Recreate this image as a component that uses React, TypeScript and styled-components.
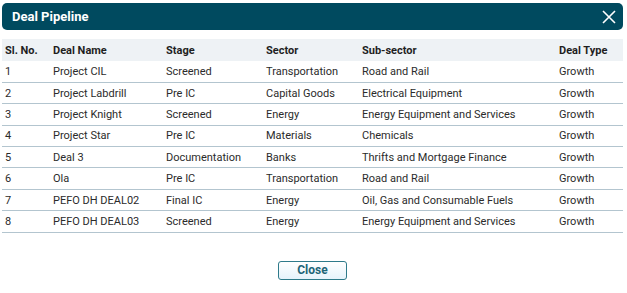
import React from "react";
import styled, { createGlobalStyle } from "styled-components";

const GlobalStyle = createGlobalStyle`
  body {
    margin: 0;
    background: #ffffff;
    font-family: Roboto, "Liberation Sans", sans-serif;
  }
`;

const Dialog = styled.div`
  width: 627px;
  height: 293px;
  box-sizing: border-box;
  padding: 3px 4px 0 2px;
  display: flex;
  flex-direction: column;
`;

const TitleBar = styled.div`
  height: 27px;
  background: #004a5f;
  border-radius: 5px;
  display: flex;
  align-items: center;
  justify-content: space-between;
  padding: 0 6px 0 10px;
`;

const Title = styled.h1`
  margin: 0;
  color: #ffffff;
  font-size: 13px;
  font-weight: 700;
`;

const CloseIcon = styled.button`
  border: none;
  background: none;
  padding: 0;
  width: 16px;
  height: 16px;
  display: flex;
  cursor: pointer;
`;

const Table = styled.table`
  margin-top: 9px;
  width: 100%;
  border-collapse: collapse;
  font-size: 11px;
  table-layout: fixed;
`;

const HeadRow = styled.tr`
  background: #eef2f5;
  height: 22px;
`;

const Th = styled.th<{ $w?: number }>`
  box-sizing: border-box;
  text-align: left;
  font-weight: 700;
  color: #1f1f1f;
  padding: 0 3px;
  white-space: nowrap;
  width: ${({ $w }) => ($w ? `${$w}px` : "auto")};
`;

const Row = styled.tr`
  height: 21.4px;
  border-bottom: 1px solid #b3c5cf;
`;

const Td = styled.td`
  color: #2b2b2b;
  padding: 0 3px;
  white-space: nowrap;
`;

const Footer = styled.div`
  display: flex;
  justify-content: center;
  padding-top: 28px;
`;

const Button = styled.button`
  width: 69px;
  height: 19px;
  border: 1px solid #2e7a8a;
  border-radius: 3px;
  background: linear-gradient(#ffffff, #e6f3fb);
  color: #1d6578;
  font-family: Roboto, "Liberation Sans", sans-serif;
  font-size: 12px;
  font-weight: 700;
  padding: 0;
  cursor: pointer;
`;

const columns: [string, number?][] = [
  ["Sl. No.", 48],
  ["Deal Name", 113],
  ["Stage", 100],
  ["Sector", 96],
  ["Sub-sector", 197],
  ["Deal Type"],
];

const deals = [
  ["1", "Project CIL", "Screened", "Transportation", "Road and Rail", "Growth"],
  ["2", "Project Labdrill", "Pre IC", "Capital Goods", "Electrical Equipment", "Growth"],
  ["3", "Project Knight", "Screened", "Energy", "Energy Equipment and Services", "Growth"],
  ["4", "Project Star", "Pre IC", "Materials", "Chemicals", "Growth"],
  ["5", "Deal 3", "Documentation", "Banks", "Thrifts and Mortgage Finance", "Growth"],
  ["6", "Ola", "Pre IC", "Transportation", "Road and Rail", "Growth"],
  ["7", "PEFO DH DEAL02", "Final IC", "Energy", "Oil, Gas and Consumable Fuels", "Growth"],
  ["8", "PEFO DH DEAL03", "Screened", "Energy", "Energy Equipment and Services", "Growth"],
];

const App = () => {
  return (
    <>
      <GlobalStyle />
      <Dialog>
        <TitleBar>
          <Title>Deal Pipeline</Title>
          <CloseIcon aria-label="Close">
            <svg width="16" height="16" viewBox="0 0 16 16">
              <path d="M2 2 L14 14 M14 2 L2 14" stroke="#ffffff" strokeWidth="1.6" />
            </svg>
          </CloseIcon>
        </TitleBar>
        <Table>
          <thead>
            <HeadRow>
              {columns.map(([label, w]) => (
                <Th key={label} $w={w}>
                  {label}
                </Th>
              ))}
            </HeadRow>
          </thead>
          <tbody>
            {deals.map((d) => (
              <Row key={d[0]}>
                {d.map((c, i) => (
                  <Td key={i}>{c}</Td>
                ))}
              </Row>
            ))}
          </tbody>
        </Table>
        <Footer>
          <Button>Close</Button>
        </Footer>
      </Dialog>
    </>
  );
};

export default App;
